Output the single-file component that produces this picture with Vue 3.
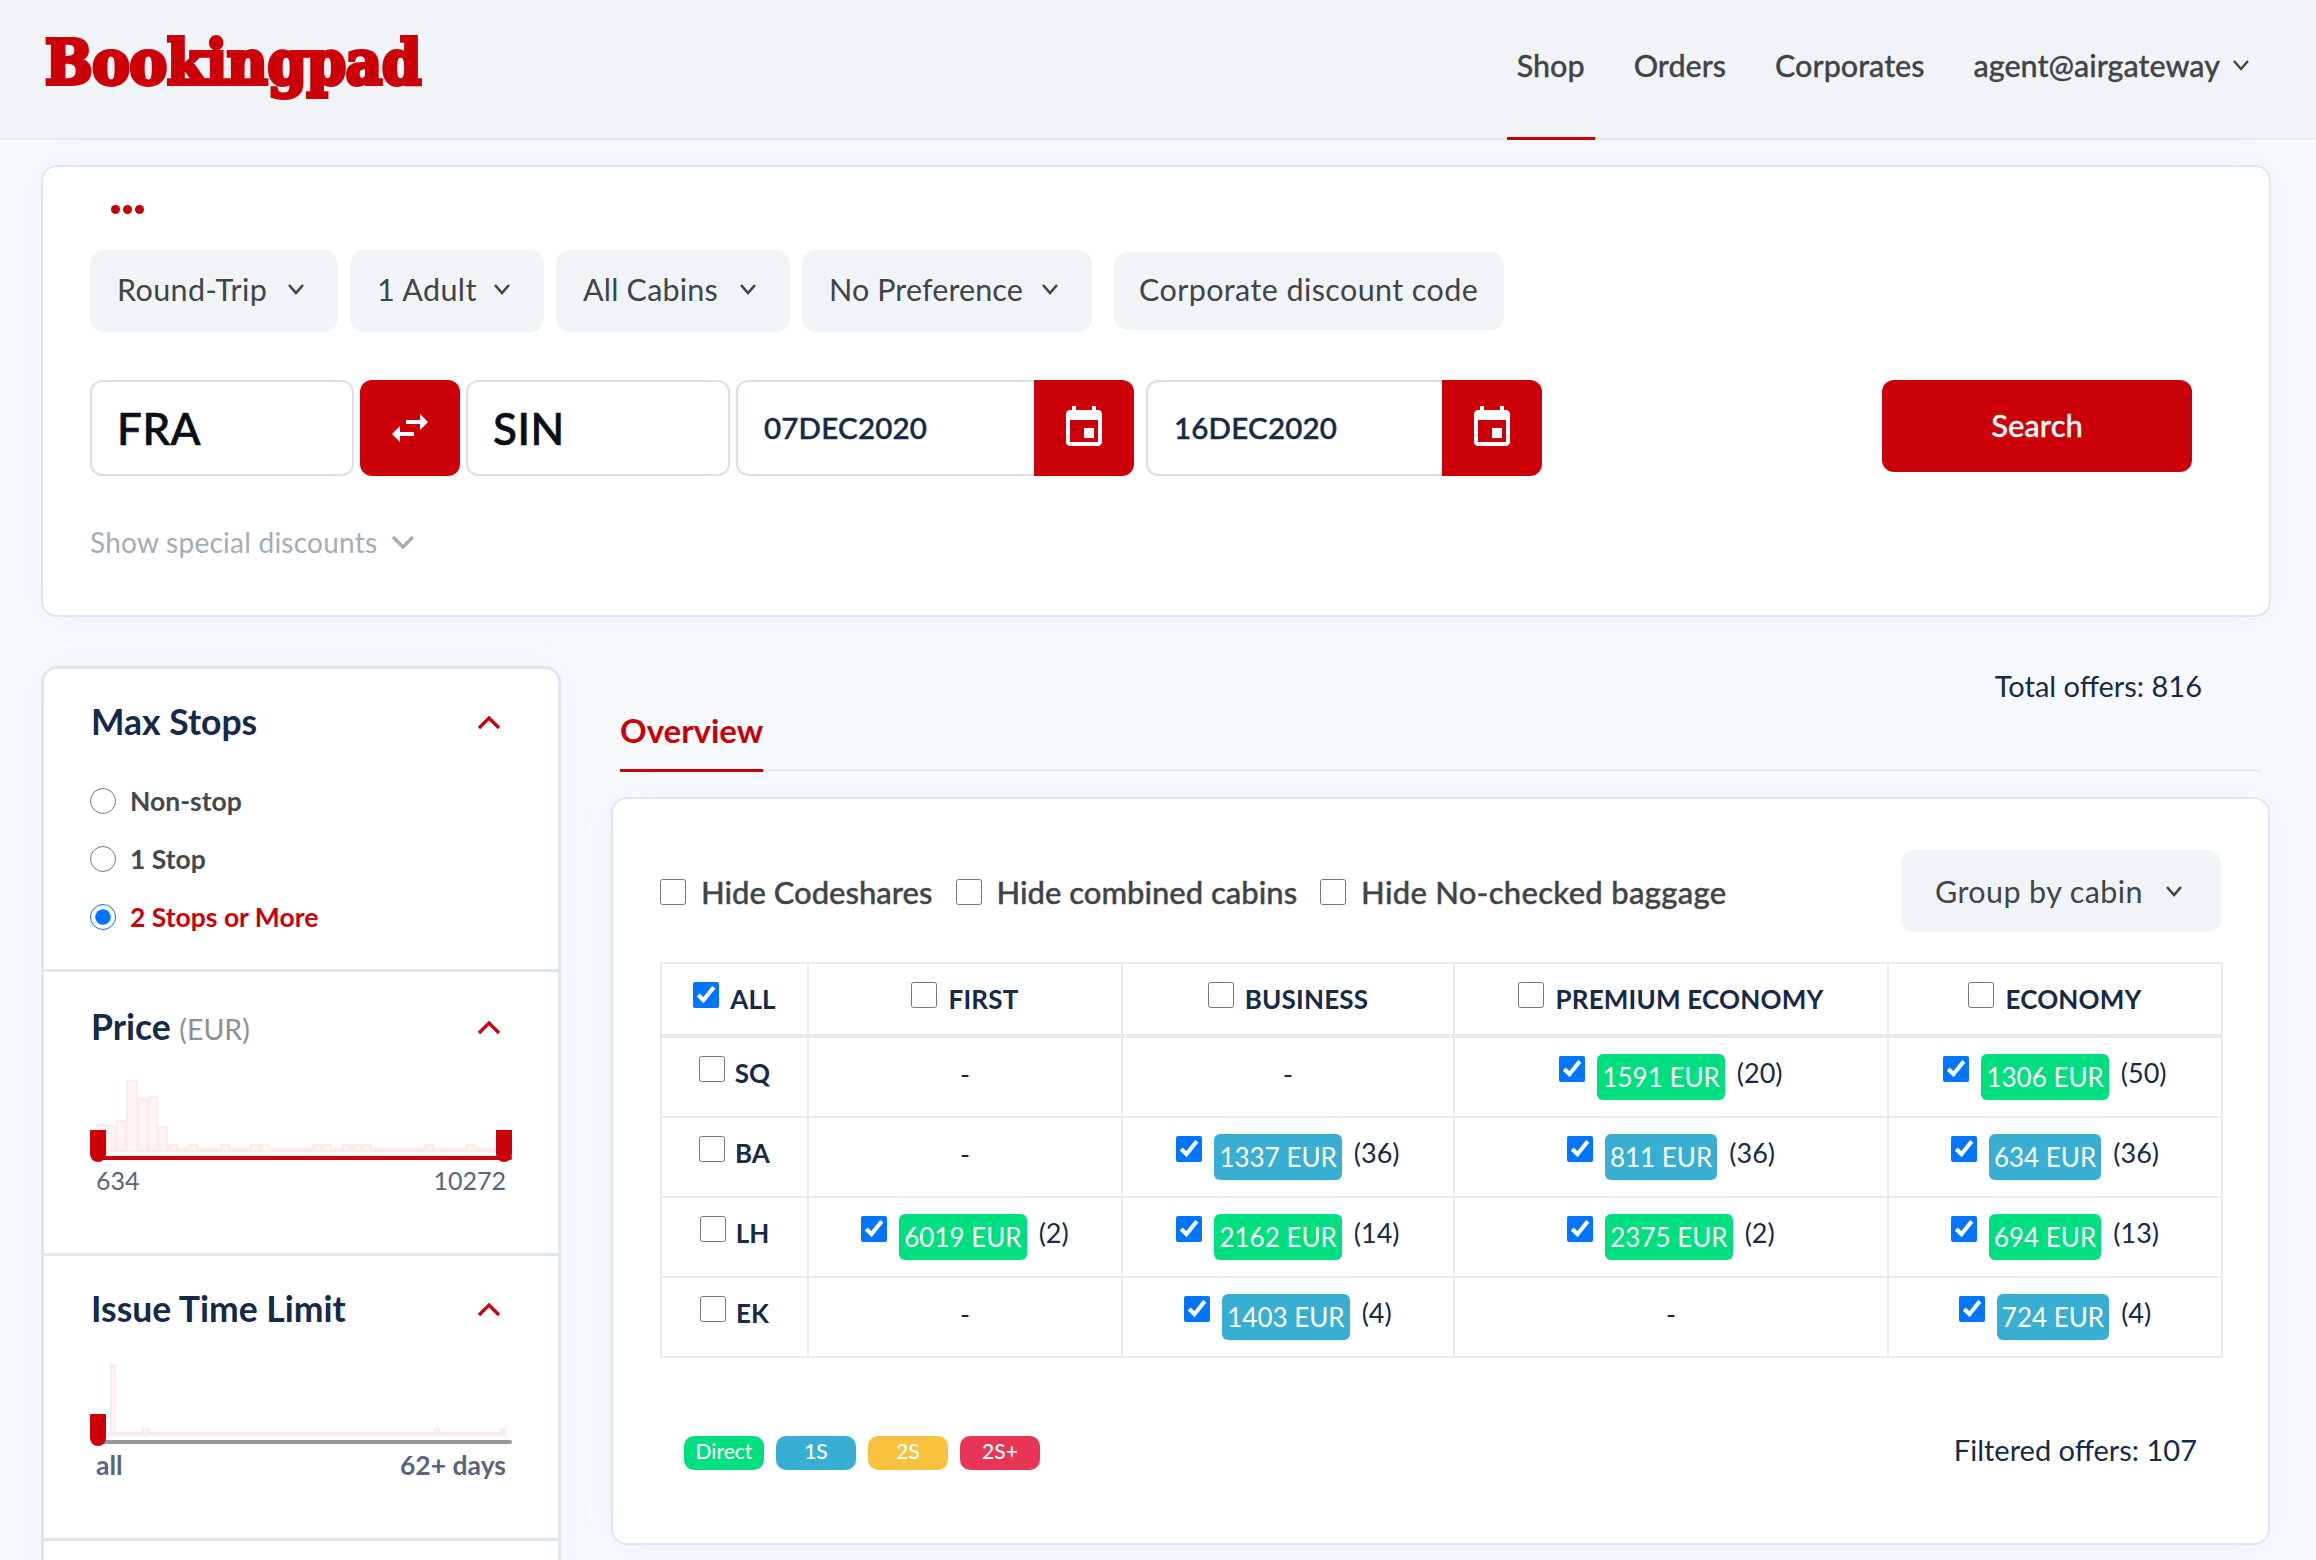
<script setup>
const pills = ['Round-Trip', '1 Adult', 'All Cabins', 'No Preference']
const nav = ['Orders', 'Corporates']
const stops = [
  { label: 'Non-stop', on: false },
  { label: '1 Stop', on: false },
  { label: '2 Stops or More', on: true }
]
const priceBars = [
  [6, 16, 28], [16, 26, 27], [26, 36, 32], [36, 48, 72], [48, 58, 54], [58, 68, 56], [68, 78, 26],
  [78, 88, 8], [88, 98, 4], [98, 108, 8], [108, 130, 4], [130, 140, 8], [140, 160, 4], [160, 170, 8],
  [170, 180, 8], [180, 222, 4], [222, 232, 8], [232, 242, 8], [242, 252, 4], [252, 262, 8], [262, 272, 8],
  [272, 282, 8], [282, 334, 4], [334, 344, 8], [344, 376, 4], [376, 386, 8], [386, 406, 4]
]
const timeBars = [
  [16, 20, 4], [20, 26, 72], [26, 52, 4], [52, 60, 8], [60, 344, 4], [344, 350, 8], [350, 410, 4], [410, 416, 8]
]
const heads = ['FIRST', 'BUSINESS', 'PREMIUM ECONOMY', 'ECONOMY']
const g = 'green'
const b = 'blue'
const rows = [
  { code: 'SQ', cells: [null, null, ['1591 EUR', '(20)', g], ['1306 EUR', '(50)', g]] },
  { code: 'BA', cells: [null, ['1337 EUR', '(36)', b], ['811 EUR', '(36)', b], ['634 EUR', '(36)', b]] },
  { code: 'LH', cells: [['6019 EUR', '(2)', g], ['2162 EUR', '(14)', g], ['2375 EUR', '(2)', g], ['694 EUR', '(13)', g]] },
  { code: 'EK', cells: [null, ['1403 EUR', '(4)', b], null, ['724 EUR', '(4)', b]] }
]
const legend = [['Direct', 'green'], ['1S', 'blue'], ['2S', 'yellow'], ['2S+', 'red']]
const hides = ['Hide Codeshares', 'Hide combined cabins', 'Hide No-checked baggage']
</script>

<template>
  <div class="page">
    <header class="top">
      <div class="logo">Bookingpad</div>
      <nav class="nav">
        <a class="nav-item active">Shop</a>
        <a v-for="n in nav" :key="n" class="nav-item">{{ n }}</a>
        <a class="nav-item">agent@airgateway
          <svg class="chev-nav" viewBox="0 0 18 12"><path d="M2 2l7 8 7-8" /></svg>
        </a>
      </nav>
    </header>

    <section class="card search">
      <div class="dots"><i></i><i></i><i></i></div>
      <div class="pills">
        <div v-for="p in pills" :key="p" class="pill">
          {{ p }}
          <svg class="chev" viewBox="0 0 18 12"><path d="M2 2l7 8 7-8" /></svg>
        </div>
        <div class="pill corp">Corporate discount code</div>
      </div>
      <div class="inputs">
        <div class="field airport">FRA</div>
        <button class="swap">
          <svg viewBox="0 0 24 24" class="ico"><path d="M6.99 11L3 15l3.99 4v-3H14v-2H6.99v-3zM21 9l-3.99-4v3H10v2h7.01v3L21 9z" /></svg>
        </button>
        <div class="field airport">SIN</div>
        <div class="date">
          <span class="date-text">07DEC2020</span>
          <span class="cal"><svg viewBox="0 0 24 24" class="ico"><path d="M17 12h-5v5h5v-5zM16 1v2H8V1H6v2H5c-1.11 0-1.99.9-1.99 2L3 19c0 1.1.89 2 2 2h14c1.1 0 2-.9 2-2V5c0-1.1-.9-2-2-2h-1V1h-2zm3 18H5V8h14v11z" /></svg></span>
        </div>
        <div class="date">
          <span class="date-text">16DEC2020</span>
          <span class="cal"><svg viewBox="0 0 24 24" class="ico"><path d="M17 12h-5v5h5v-5zM16 1v2H8V1H6v2H5c-1.11 0-1.99.9-1.99 2L3 19c0 1.1.89 2 2 2h14c1.1 0 2-.9 2-2V5c0-1.1-.9-2-2-2h-1V1h-2zm3 18H5V8h14v11z" /></svg></span>
        </div>
        <button class="go">Search</button>
      </div>
      <div class="special">
        Show special discounts
        <svg class="chev-special" viewBox="0 0 24 14"><path d="M2 2l10 10L22 2" /></svg>
      </div>
    </section>

    <div class="content">
      <aside class="card side">
        <div class="sec sec-stops">
          <div class="sec-head">
            <h3>Max Stops</h3>
            <svg class="chev-up" viewBox="0 0 24 15"><path d="M2 13L12 3l10 10" /></svg>
          </div>
          <label v-for="s in stops" :key="s.label" class="radio" :class="{ on: s.on }">
            <input type="radio" name="stops" :checked="s.on" />
            <span>{{ s.label }}</span>
          </label>
        </div>
        <div class="sec sec-chart">
          <div class="sec-head">
            <h3>Price <small>(EUR)</small></h3>
            <svg class="chev-up" viewBox="0 0 24 15"><path d="M2 13L12 3l10 10" /></svg>
          </div>
          <div class="chart">
            <svg class="hist" viewBox="0 0 422 72">
              <rect v-for="(r, i) in priceBars" :key="i" :x="r[0] + 1" :y="73 - r[2]" :width="r[1] - r[0] - 2" :height="r[2] - 2" class="bar" />
            </svg>
            <div class="track"></div>
            <div class="handle left"></div>
            <div class="handle right"></div>
          </div>
          <div class="scale"><span>634</span><span>10272</span></div>
        </div>
        <div class="sec sec-chart sec-last">
          <div class="sec-head">
            <h3>Issue Time Limit</h3>
            <svg class="chev-up" viewBox="0 0 24 15"><path d="M2 13L12 3l10 10" /></svg>
          </div>
          <div class="chart time">
            <svg class="hist" viewBox="0 0 422 72">
              <rect v-for="(r, i) in timeBars" :key="i" :x="r[0] + 1" :y="73 - r[2]" :width="r[1] - r[0] - 2" :height="r[2] - 2" class="bar" />
            </svg>
            <div class="track grey"></div>
            <div class="handle left"></div>
          </div>
          <div class="scale bold"><span>all</span><span>62+ days</span></div>
        </div>
      </aside>

      <main class="results">
        <div class="total">Total offers: 816</div>
        <div class="tabs"><span class="tab">Overview</span></div>
        <div class="card panel">
          <div class="toolbar">
            <div class="hides">
              <label v-for="h in hides" :key="h" class="hide">
                <input type="checkbox" />
                <span>{{ h }}</span>
              </label>
            </div>
            <div class="pill group">
              Group by cabin
              <svg class="chev" viewBox="0 0 18 12"><path d="M2 2l7 8 7-8" /></svg>
            </div>
          </div>
          <table class="grid">
            <colgroup>
              <col class="c0" /><col class="c1" /><col class="c2" /><col class="c3" /><col class="c4" />
            </colgroup>
            <thead>
              <tr>
                <th>
                  <div class="cellflex head"><input type="checkbox" checked /><span>ALL</span></div>
                </th>
                <th v-for="h in heads" :key="h">
                  <div class="cellflex head"><input type="checkbox" /><span>{{ h }}</span></div>
                </th>
              </tr>
            </thead>
            <tbody>
              <tr v-for="r in rows" :key="r.code">
                <td>
                  <div class="cellflex code"><input type="checkbox" /><span>{{ r.code }}</span></div>
                </td>
                <td v-for="(c, i) in r.cells" :key="i">
                  <div v-if="c" class="cellflex offer">
                    <input type="checkbox" checked />
                    <span class="badge" :class="c[2]">{{ c[0] }}</span>
                    <span class="count">{{ c[1] }}</span>
                  </div>
                  <div v-else class="dash">-</div>
                </td>
              </tr>
            </tbody>
          </table>
          <div class="foot">
            <div class="legend">
              <span v-for="l in legend" :key="l[0]" class="tag" :class="l[1]">{{ l[0] }}</span>
            </div>
            <div class="filtered">Filtered offers: 107</div>
          </div>
        </div>
      </main>
    </div>
  </div>
</template>

<style>
html, body { margin: 0; background: #f7fafd; }
</style>

<style scoped>
.page {
  width: 2316px;
  height: 1560px;
  overflow: hidden;
  background: #f7fafd;
  font-family: "Lato", "Noto Sans", sans-serif;
  color: #15294b;
  box-sizing: border-box;
}
.top {
  height: 140px;
  box-sizing: border-box;
  border-bottom: 2px solid #e3e9f0;
  background: #f0f4f7;
  display: flex;
  justify-content: space-between;
  padding: 0 56px 0 45px;
}
.logo {
  font-family: "DejaVu Serif", serif;
  font-stretch: condensed;
  font-weight: 700;
  font-size: 62.5px;
  line-height: 60px;
  letter-spacing: -0.2px;
  color: #cc0008;
  -webkit-text-stroke: 4px #cc0008;
  padding-top: 32px;
}
.nav { display: flex; gap: 29px; height: 140px; }
.nav-item {
  box-sizing: border-box;
  height: 140px;
  padding: 0 10px 8px;
  display: flex;
  align-items: center;
  gap: 12px;
  font-size: 30.5px;
  font-weight: 500;
  color: #3f4449;
  border-bottom: 3px solid transparent;
  -webkit-text-stroke: 0.3px #3f4449;
}
.nav-item.active { border-bottom-color: #cc0008; }
.chev-nav { width: 18px; height: 12px; fill: none; stroke: #3f4449; stroke-width: 2.4; }

.card {
  background: #fff;
  border: 2px solid #dde6f2;
  border-radius: 16px;
  box-sizing: border-box;
  box-shadow: 0 0 40px rgba(60, 100, 150, 0.05);
}
.search {
  margin: 25px 45px 0 41px;
  height: 452px;
  padding: 0 47px;
  position: relative;
}
.dots { display: flex; gap: 3px; padding: 38px 0 0 21px; height: 83px; box-sizing: border-box; }
.dots i { width: 9px; height: 9px; border-radius: 50%; background: #cc0008; display: block; }
.pills { display: flex; gap: 12px; align-items: center; height: 82px; }
.pill {
  height: 82px;
  box-sizing: border-box;
  padding: 0 33px 4px 27px;
  display: flex;
  align-items: center;
  justify-content: space-between;
  background: #f0f4f7;
  border-radius: 14px;
  font-size: 30.5px;
  color: #3f4449;
  letter-spacing: 0.4px;
  white-space: nowrap;
}
.pills .pill:nth-child(1) { width: 248px; }
.pills .pill:nth-child(2) { width: 194px; }
.pills .pill:nth-child(3) { width: 234px; letter-spacing: 0.2px; }
.pills .pill:nth-child(4) { width: 290px; letter-spacing: 0.1px; }
.pills .pill.corp { width: 390px; height: 78px; margin-left: 10px; padding: 0 27px 4px 25px; }
.chev { width: 18px; height: 12px; fill: none; stroke: #3f4449; stroke-width: 2.6; }

.inputs { display: flex; margin-top: 48px; height: 96px; align-items: flex-start; }
.field {
  box-sizing: border-box;
  height: 96px;
  border: 2px solid #dadfeb;
  border-radius: 12px;
  background: #fff;
}
.airport {
  width: 264px;
  padding-left: 25px;
  display: flex;
  align-items: center;
  font-size: 44px;
  font-weight: 500;
  color: #0a0f17;
  letter-spacing: 0.5px;
  -webkit-text-stroke: 0.7px #0a0f17;
}
.swap {
  width: 100px;
  height: 96px;
  margin: 0 6px;
  border: 0;
  padding: 0;
  border-radius: 12px;
  background: #cc0008;
  display: flex;
  align-items: center;
  justify-content: center;
}
.ico { width: 48px; height: 48px; fill: #fff; }
.date {
  display: flex;
  width: 398px;
  margin-left: 6px;
}
.date + .date { margin-left: 12px; width: 396px; }
.date-text {
  flex: 1;
  box-sizing: border-box;
  height: 96px;
  line-height: 92px;
  padding-left: 26px;
  border: 2px solid #dadfeb;
  border-right: 0;
  border-radius: 12px 0 0 12px;
  font-size: 29.5px;
  font-weight: 500;
  color: #15294b;
  letter-spacing: 0.2px;
  -webkit-text-stroke: 0.5px #15294b;
}
.cal {
  width: 100px;
  height: 96px;
  background: #cc0008;
  border-radius: 0 12px 12px 0;
  flex: none;
  display: flex;
  align-items: center;
  justify-content: center;
}
.go {
  margin-left: auto;
  margin-right: 30px;
  width: 310px;
  height: 92px;
  border: 0;
  border-radius: 12px;
  background: #cc0008;
  color: #fff;
  font-family: inherit;
  font-size: 31px;
  font-weight: 500;
  padding: 0 0 3px;
  -webkit-text-stroke: 0.3px #fff;
}
.special {
  margin-top: 49px;
  display: flex;
  align-items: center;
  gap: 14px;
  font-size: 28px;
  color: #a2acba;
  letter-spacing: 0.25px;
}
.chev-special { width: 24px; height: 14px; fill: none; stroke: #a2acba; stroke-width: 3.4; }

.content {
  display: flex;
  margin: 49px 46px 0 41px;
  gap: 50px;
  align-items: flex-start;
}
.side {
  width: 520px;
  flex: none;
  height: 1000px;
  border-width: 3px;
  border-color: #dfe5f0;
}
.sec { box-sizing: border-box; padding: 0 38px 0 46px; border-bottom: 3px solid #dfe5f0; }
.sec-stops { height: 303px; padding-top: 30px; }
.sec-chart { height: 284px; padding-top: 32px; }
.sec-last { height: 285px; padding-top: 30px; }
.sec-head { display: flex; justify-content: space-between; align-items: center; height: 44px; }
.sec-head h3 { margin: 0 0 0 1px; font-size: 35.5px; font-weight: 700; color: #15294b; }
.sec-head small { font-size: 28.5px; font-weight: 400; color: #8d8f93; }
.chev-up { width: 24px; height: 15px; margin: 2px 19px 0 0; fill: none; stroke: #cc0008; stroke-width: 3.2; }
.radio {
  display: flex;
  align-items: center;
  gap: 14px;
  height: 58px;
  font-size: 26.5px;
  font-weight: 700;
  color: #45484c;
}
.sec-head + .radio { margin-top: 29px; }
.radio.on { color: #cc0008; }
.radio input { width: 26px; height: 26px; margin: 0; }

.chart { position: relative; height: 110px; margin: 32px 0 0 0; width: 422px; }
.hist { position: absolute; left: 0; top: 0; width: 422px; height: 72px; overflow: visible; }
.bar { fill: #fdf5f4; stroke: #fbecea; stroke-width: 2; }
.track { position: absolute; left: 6px; top: 76px; height: 4px; width: 416px; background: #cc0008; border-radius: 2px; }
.track.grey { background: #979797; }
.handle { position: absolute; top: 50px; width: 16px; height: 32px; background: #cc0008; border-radius: 0 0 8px 8px; }
.handle.left { left: 0; }
.handle.right { left: 406px; }
.scale {
  display: flex;
  justify-content: space-between;
  width: 410px;
  margin: -25px 0 0 6px;
  font-size: 25px;
  color: #56667f;
}
.scale.bold { font-weight: 700; font-size: 26.5px; }
.chart.time { margin-top: 34px; }

.results { flex: 1; min-width: 0; }
.total { height: 40px; line-height: 40px; text-align: right; padding-right: 68px; font-size: 29px; color: #15294b; }
.tabs {
  margin: 0 8px 0 9px;
  height: 66px;
  box-sizing: border-box;
  border-bottom: 3px solid #e6ecf3;
  display: flex;
}
.tab {
  height: 66px;
  box-sizing: border-box;
  border-bottom: 3px solid #cc0008;
  padding-top: 4px;
  line-height: 40px;
  font-size: 33px;
  font-weight: 700;
  color: #cc0008;
}
.panel { margin-top: 25px; height: 748px; padding: 51px 47px 0; }
.toolbar { display: flex; justify-content: space-between; align-items: center; height: 82px; }
.hides { display: flex; gap: 23px; padding-top: 1px; }
.hide { display: flex; align-items: center; gap: 15px; font-size: 31px; font-weight: 500; color: #3f4449; -webkit-text-stroke: 0.4px #3f4449; }
.hide:last-child span { letter-spacing: 0.3px; }
.hide input { width: 26px; height: 26px; margin: 0; }
.pill.group { width: 320px; padding: 0 38px 0 34px; justify-content: space-between; }

.grid {
  margin-top: 30px;
  width: 1561px;
  table-layout: fixed;
  border-collapse: collapse;
}
.c0 { width: 147px; }
.c1 { width: 314px; }
.c2 { width: 332px; }
.c3 { width: 434px; }
.c4 { width: 334px; }
.grid th, .grid td {
  border: 2px solid #e9ecef;
  padding: 0;
  vertical-align: top;
}
.grid th { height: 70px; border-bottom-width: 4px; }
.grid td { height: 78px; }
.cellflex { display: flex; justify-content: center; align-items: flex-start; }
.cellflex input { width: 26px; height: 26px; margin: 0; flex: none; }
.head { gap: 11px; padding-top: 18px; font-size: 26px; font-weight: 700; line-height: 34px; color: #15294b; letter-spacing: 0.2px; }
.code { gap: 10px; padding-top: 18px; font-size: 26px; font-weight: 700; line-height: 34px; color: #15294b; }
.offer { gap: 12px; padding-top: 16px; }
.offer input { margin-top: 2px; }
.badge {
  height: 46px;
  line-height: 46px;
  padding: 0 5px;
  border-radius: 6px;
  font-size: 26px;
  color: #fff;
  white-space: nowrap;
}
.count { font-size: 27px; line-height: 38px; color: #15294b; }
.green { background: #00df7f; }
.blue { background: #38afd2; }
.yellow { background: #f7c23f; }
.red { background: #e83556; }
.dash { text-align: center; font-size: 27px; line-height: 38px; padding-top: 17px; color: #15294b; }
.foot { display: flex; justify-content: space-between; align-items: center; margin-top: 77px; height: 36px; }
.legend { display: flex; gap: 12px; padding-left: 24px; }
.tag {
  width: 80px;
  height: 34px;
  line-height: 30px;
  text-align: center;
  border-radius: 10px;
  color: #fff;
  font-size: 21px;
  font-weight: 500;
}
.filtered { font-size: 29px; padding: 0 24px 7px 0; color: #15294b; }
</style>
